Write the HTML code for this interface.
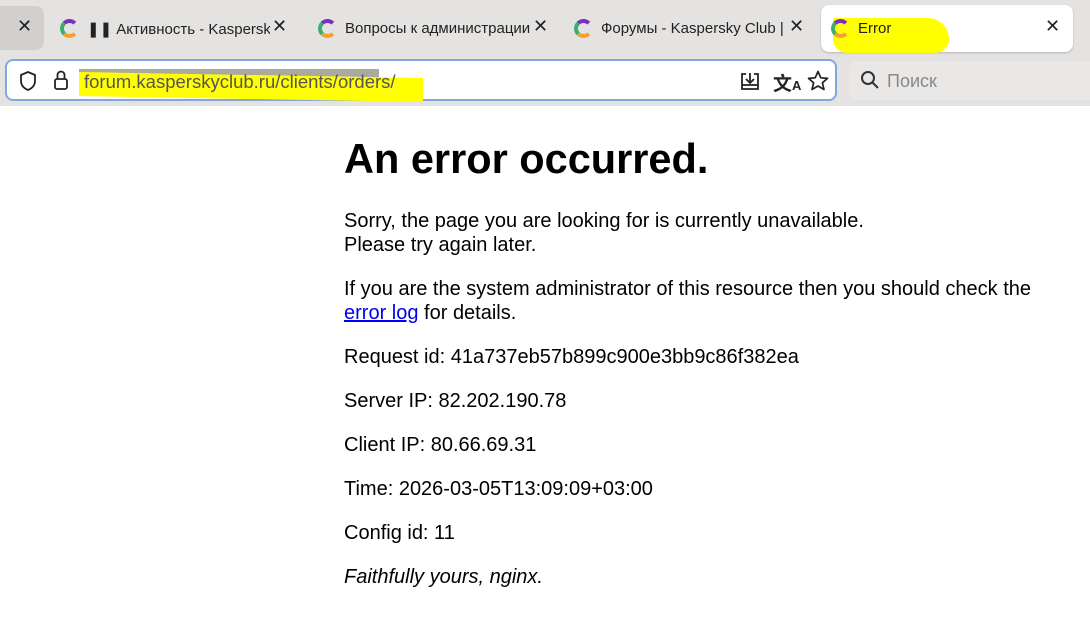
<!DOCTYPE html>
<html><head><meta charset="utf-8"><style>
*{margin:0;padding:0;box-sizing:border-box}
body{width:1090px;height:619px;overflow:hidden;background:#fff;font-family:"Liberation Sans","Noto Sans CJK SC",sans-serif;position:relative}
.top{position:absolute;left:0;top:0;width:1090px;height:106px;background:#e4e3e2}
.tab{position:absolute;top:5px;height:47px;font-size:15px;color:#222;display:flex;align-items:center;white-space:nowrap;overflow:hidden}
.fav{width:19px;height:19px;border-radius:50%;border:4px solid;border-color:#7b2fbf #e0412a #f2a12b #3ab06a;border-right-color:transparent;margin-right:8px;flex:none}
.x{position:absolute;font-size:18px;color:#222;top:13px}
.addr{position:absolute;left:5px;top:59px;width:832px;height:42px;background:#fff;border:2px solid #80a7e2;border-radius:8px}
.search{position:absolute;left:849px;top:61px;width:250px;height:39px;background:#e9e8e7;border-radius:8px;font-size:18px;color:#888}
.c{position:absolute;left:344px;font-size:20px;color:#000;line-height:24px;white-space:nowrap}
a{color:#0000ee}
</style></head><body>
<div class="top">
  <div style="position:absolute;left:0;top:6px;width:44px;height:44px;background:#d1d0cf;border-radius:0 8px 8px 0"></div>
  <div class="x" style="left:17px;top:16px">✕</div>
  <div class="tab" style="left:60px;width:210px"><div class="fav"></div><span>❚❚ Активность - Kaspersky C</span></div>
  <div class="x" style="left:272px;top:16px">✕</div>
  <div class="tab" style="left:318px;width:212px"><div class="fav"></div><span>Вопросы к администрации</span></div>
  <div class="x" style="left:533px;top:16px">✕</div>
  <div class="tab" style="left:574px;width:212px"><div class="fav"></div><span>Форумы - Kaspersky Club | K</span></div>
  <div class="x" style="left:789px;top:16px">✕</div>
  <div style="position:absolute;left:821px;top:5px;width:252px;height:47px;background:#fff;border-radius:8px;box-shadow:0 1px 2px rgba(0,0,0,.2)"></div>
  <div style="position:absolute;left:833px;top:18px;width:116px;height:35px;background:#ffff00;border-radius:2px 30px 20px 20px"></div>
  <div class="tab" style="left:831px;width:120px"><div class="fav"></div><span>Error</span></div>
  <div class="x" style="left:1045px;top:16px">✕</div>
  <div class="addr">
    <svg style="position:absolute;left:11px;top:9px" width="20" height="22" viewBox="0 0 20 22"><path d="M10 2 L17 5 V11 C17 16 13 19 10 20 C7 19 3 16 3 11 V5 Z" fill="none" stroke="#222" stroke-width="1.8"/></svg>
    <svg style="position:absolute;left:46px;top:8px" width="16" height="22" viewBox="0 0 16 22"><rect x="2" y="10" width="12" height="10" rx="2" fill="none" stroke="#222" stroke-width="1.8"/><path d="M4.5 10 V6 a3.5 3.5 0 0 1 7 0 V10" fill="none" stroke="#222" stroke-width="1.8"/></svg>
    <div style="position:absolute;left:72px;top:8px;width:300px;height:17px;background:#a9a9a0"></div>
    <div style="position:absolute;left:72px;top:14px;width:344px;height:24px;background:#ffff00;transform:skewY(1deg)"></div>
    <div style="position:absolute;left:77px;top:9px;font-size:18.5px;color:#555;line-height:24px;white-space:nowrap">forum.kasperskyclub.ru/clients/orders/</div>
    <svg style="position:absolute;left:732px;top:9px" width="22" height="22" viewBox="0 0 22 22"><path d="M7 4 H3 V19 H19 V4 H15 M11 3 V13 M7 9 L11 13 L15 9 M3 15 H19" fill="none" stroke="#222" stroke-width="1.8"/></svg>
    <div style="position:absolute;left:766px;top:8px;font-size:19px;color:#222;font-weight:bold">文<span style="font-size:13px">A</span></div>
    <svg style="position:absolute;left:799px;top:8px" width="24" height="24" viewBox="0 0 24 24"><path d="M12 2.5 L14.8 8.8 L21.5 9.4 L16.4 13.8 L18 20.5 L12 17 L6 20.5 L7.6 13.8 L2.5 9.4 L9.2 8.8 Z" fill="none" stroke="#222" stroke-width="1.7" stroke-linejoin="round"/></svg>
  </div>
  <div class="search">
    <svg style="position:absolute;left:11px;top:9px" width="20" height="20" viewBox="0 0 20 20"><circle cx="8" cy="8" r="6" fill="none" stroke="#333" stroke-width="2"/><path d="M12.5 12.5 L18 18" stroke="#333" stroke-width="2"/></svg>
    <span style="position:absolute;left:38px;top:10px">Поиск</span>
  </div>
</div>
<div style="position:absolute;left:344px;top:134px;font-size:41.5px;font-weight:bold;line-height:50px;white-space:nowrap">An error occurred.</div>
<div class="c" style="top:209px">Sorry, the page you are looking for is currently unavailable.<br>Please try again later.</div>
<div class="c" style="top:277px">If you are the system administrator of this resource then you should check the<br><a href="#">error log</a> for details.</div>
<div class="c" style="top:345px">Request id: 41a737eb57b899c900e3bb9c86f382ea</div>
<div class="c" style="top:389px">Server IP: 82.202.190.78</div>
<div class="c" style="top:433px">Client IP: 80.66.69.31</div>
<div class="c" style="top:477px">Time: 2026-03-05T13:09:09+03:00</div>
<div class="c" style="top:521px">Config id: 11</div>
<div class="c" style="top:565px;font-style:italic">Faithfully yours, nginx.</div>
</body></html>
